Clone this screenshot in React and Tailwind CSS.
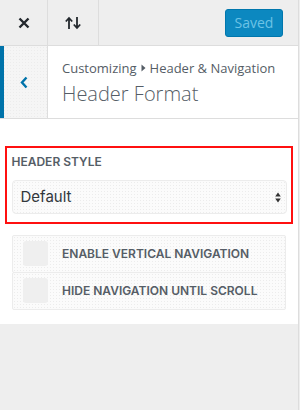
const dots = {
  backgroundImage: 'radial-gradient(#ececec 0.5px, transparent 0.6px)',
  backgroundSize: '3px 3px',
};

function CheckRow({ label, first }) {
  return (
    <label className={`flex items-center h-[38px] border border-[#ececec] rounded-[2px] bg-[#fbfbfb] ${first ? '' : '-mt-px'}`} style={dots}>
      <span className="ml-[10px] w-[25px] h-[25px] rounded-[3px] bg-[#efefef]" />
      <span className="ml-[14px] text-[12px] font-semibold text-[#555d66] [font-family:Inter,sans-serif]">{label}</span>
    </label>
  );
}

export default function App() {
  return (
    <div className="w-[300px] h-[410px] bg-[#eeeeee] overflow-hidden [font-family:'Open_Sans',sans-serif]">
      <div className="w-[299px] h-full border-r border-[#dddddd] flex flex-col">
        {/* Top bar */}
        <div className="h-[46px] flex items-stretch border-b border-[#dddddd] bg-[#eeeeee]">
          <button className="w-[48px] border-r border-[#dddddd] flex items-center justify-center">
            <svg width="12" height="12" viewBox="0 0 12 12">
              <path d="M1.5 1.5L10.5 10.5M10.5 1.5L1.5 10.5" stroke="#23282d" strokeWidth="2.4" />
            </svg>
          </button>
          <button className="w-[51px] border-r border-[#dddddd] flex items-center justify-center">
            <svg width="18" height="14" viewBox="0 0 18 14">
              <path d="M5 13V2.5M1.8 5.5L5 2L8.2 5.5" stroke="#23282d" strokeWidth="1.8" fill="none" />
              <path d="M13 1V11.5M9.8 8.5L13 12L16.2 8.5" stroke="#23282d" strokeWidth="1.8" fill="none" />
            </svg>
          </button>
          <div className="flex-1 flex items-center justify-end pr-[15px]">
            <span className="w-[58px] h-[28px] rounded-[3px] bg-[#0c88c0] border border-[#0077ad] flex items-center justify-center text-[14px] text-[#6cc3e6]">
              Saved
            </span>
          </div>
        </div>

        {/* Section header */}
        <div className="h-[73px] flex bg-white border-b border-[#dddddd]">
          <div className="w-[48px] flex items-center border-r border-[#dddddd] bg-[#f5f5f5]" style={dots}>
            <div className="w-[4px] h-full bg-[#0073aa]" />
            <svg className="ml-[16px] mt-[1px]" width="8" height="13" viewBox="0 0 8 13">
              <path d="M6.5 1.5L2 6.5L6.5 11.5" stroke="#0073aa" strokeWidth="2.4" fill="none" />
            </svg>
          </div>
          <div className="pl-[14px] pt-[13px] text-[#555d66]">
            <div className="text-[13px] leading-[18px] flex items-center">
              Customizing
              <svg className="mx-[4px]" width="5" height="8" viewBox="0 0 5 8"><path d="M0.5 0.5L4.5 4L0.5 7.5Z" fill="#555d66" /></svg>
              Header &amp; Navigation
            </div>
            <div className="text-[20px] leading-[26px] mt-[4px] font-light">Header Format</div>
          </div>
        </div>

        {/* Controls */}
        <div className="bg-white pt-[27px] pb-[14px] pl-[5px] pr-[5px]">
          <div className="border-[2.5px] border-[#ff1010] px-[4.5px] pt-[6px] pb-[7.5px]">
            <div className="text-[12px] font-semibold text-[#555d66] leading-[16px] [font-family:Inter,sans-serif]">HEADER STYLE</div>
            <div className="mt-[10px] h-[34px] rounded-[4px] border border-[#ececec] bg-[#fbfbfb] flex items-center justify-between pl-[8px] pr-[5px]" style={dots}>
              <span className="text-[15px] text-[#32373c] [font-family:Inter,sans-serif]">Default</span>
              <svg width="6" height="11" viewBox="0 0 6 11">
                <path d="M3 0.5L5.8 4.5H0.2Z M3 10.5L5.8 6.5H0.2Z" fill="#333" />
              </svg>
            </div>
          </div>
          <div className="mx-[7px] mt-[11px]">
            <CheckRow label="ENABLE VERTICAL NAVIGATION" first />
            <CheckRow label="HIDE NAVIGATION UNTIL SCROLL" />
          </div>
        </div>
      </div>
    </div>
  );
}
